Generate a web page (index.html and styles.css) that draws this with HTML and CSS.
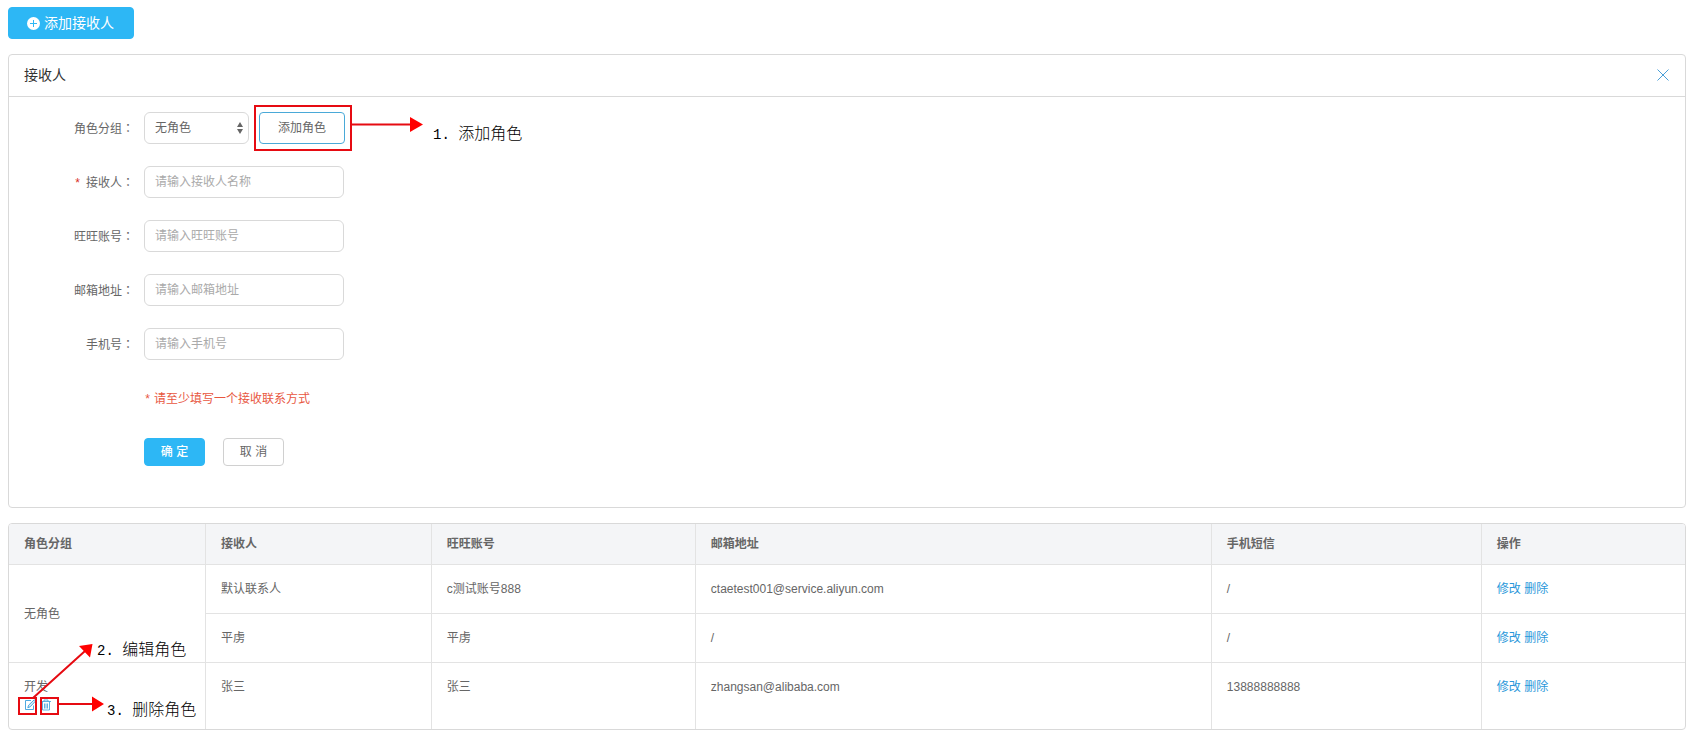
FILE: index.html
```html
<!DOCTYPE html>
<html lang="zh-CN">
<head>
<meta charset="utf-8">
<title>接收人</title>
<link rel="stylesheet" href="styles.css">
</head>
<body>
<main class="page">
  <div class="toolbar">
    <button type="button" class="btn btn-primary btn-large">
      <svg class="plus-icon" viewBox="0 0 13 13" aria-hidden="true"><circle cx="6.5" cy="6.5" r="6.5" fill="#fff"/><path d="M6.5 3v7M3 6.5h7" stroke="#2db7f5" stroke-width="1"/></svg>
      <span>添加接收人</span>
    </button>
  </div>

  <section class="panel">
    <header class="panel-head">
      <h1 class="panel-title">接收人</h1>
      <button type="button" class="close" aria-label="关闭">
        <svg viewBox="0 0 12 12" width="12" height="12"><path d="M.5 .5l11 11M11.5 .5l-11 11" stroke="#4a9fd8" stroke-width="1" fill="none"/></svg>
      </button>
    </header>
    <form class="form">
      <div class="row">
        <label class="label" for="role">角色分组<span class="colon" lang="zh-Hant">：</span></label>
        <div class="select-wrap">
          <select id="role" class="field"><option>无角色</option></select>
          <svg class="select-arrows" viewBox="0 0 6 12" aria-hidden="true"><path d="M3 0l3 5H0zM3 12l3-5H0z" fill="#666"/></svg>
        </div>
        <div class="role-add">
          <button type="button" class="btn btn-outline">添加角色</button>
          <svg class="mark mark-add" viewBox="0 0 170 48" aria-hidden="true"><rect x="1" y="2" width="96" height="44" fill="none" stroke="#e60b12" stroke-width="2"/><path d="M98 20.500H158" stroke="#e60b12" stroke-width="2"/><path d="M156 13l13 7.500-13 7.500z" fill="#f00"/></svg>
          <span class="note note-add"><span class="num">1. </span>添加角色</span>
        </div>
      </div>
      <div class="row">
        <label class="label" for="name"><span class="star">*</span>接收人<span class="colon" lang="zh-Hant">：</span></label>
        <input id="name" class="field" type="text" placeholder="请输入接收人名称">
      </div>
      <div class="row">
        <label class="label" for="wang">旺旺账号<span class="colon" lang="zh-Hant">：</span></label>
        <input id="wang" class="field" type="text" placeholder="请输入旺旺账号">
      </div>
      <div class="row">
        <label class="label" for="mail">邮箱地址<span class="colon" lang="zh-Hant">：</span></label>
        <input id="mail" class="field" type="email" placeholder="请输入邮箱地址">
      </div>
      <div class="row">
        <label class="label" for="phone">手机号<span class="colon" lang="zh-Hant">：</span></label>
        <input id="phone" class="field" type="tel" placeholder="请输入手机号">
      </div>
      <p class="hint"><span class="star">*</span>请至少填写一个接收联系方式</p>
      <div class="actions">
        <button type="submit" class="btn btn-primary btn-small">确 定</button>
        <button type="button" class="btn btn-small">取 消</button>
      </div>
    </form>
  </section>

  <table class="grid">
    <colgroup><col class="c-role"><col class="c-name"><col class="c-wang"><col class="c-mail"><col class="c-sms"><col class="c-ops"></colgroup>
    <thead>
      <tr><th>角色分组</th><th>接收人</th><th>旺旺账号</th><th>邮箱地址</th><th>手机短信</th><th>操作</th></tr>
    </thead>
    <tbody>
      <tr><td rowspan="2" class="middle">无角色</td><td>默认联系人</td><td>c测试账号888</td><td>ctaetest001@service.aliyun.com</td><td>/</td><td><a href="#">修改</a> <a href="#">删除</a></td></tr>
      <tr><td>平虏</td><td>平虏</td><td>/</td><td>/</td><td><a href="#">修改</a> <a href="#">删除</a></td></tr>
      <tr>
        <td>开发
          <div class="role-tools">
            <a href="#" class="tool" aria-label="编辑角色"><svg viewBox="0 0 12 12" width="12" height="12"><path d="M7 1.500H1.500v9h8V6.500" fill="none" stroke="#3a9fdc" stroke-width=".9"/><path d="M3.800 8.700l.8-2.500L10.200.8l1.300 1.300L6.200 7.800z" fill="#d8ecf9" stroke="#3a9fdc" stroke-width=".9"/></svg></a>
            <a href="#" class="tool" aria-label="删除角色"><svg viewBox="0 0 12 12" width="12" height="12"><path d="M1 2.500h10M4 2.500v-1.500h4v1.500M2.500 2.500v8.500h7V2.500M4.500 4.500v5M6 4.500v5M7.500 4.500v5" fill="none" stroke="#3a9fdc" stroke-width=".8"/></svg></a>
            <svg class="mark mark-tools" viewBox="0 0 88 74" aria-hidden="true"><rect x="2" y="56" width="17" height="16" fill="none" stroke="#e60b12" stroke-width="2"/><rect x="24" y="56" width="17" height="16" fill="none" stroke="#e60b12" stroke-width="2"/><path d="M16 56L68 9M42 62H76" stroke="#e60b12" stroke-width="2"/><path d="M75.500 2L62 4l11 11.500zM75 54.500l12 7.500L75 69.500z" fill="#f00"/></svg>
            <span class="note note-edit"><span class="num">2. </span>编辑角色</span>
            <span class="note note-delete"><span class="num">3. </span>删除角色</span>
          </div>
        </td>
        <td>张三</td><td>张三</td><td>zhangsan@alibaba.com</td><td>13888888888</td><td><a href="#">修改</a> <a href="#">删除</a></td>
      </tr>
    </tbody>
  </table>
</main>
</body>
</html>
```

FILE: styles.css
```css
* { box-sizing: border-box; }

body {
  margin: 0;
  background: #fff;
  color: #666;
  font: 12px/18px "Liberation Sans", "Noto Sans CJK SC", sans-serif;
}

button, input, select { font: inherit; color: inherit; }
a { color: #2a97da; text-decoration: none; }
.page { padding: 7px 11px 10px 8px; }
.toolbar { display: flex; margin-bottom: 15px; }

.btn {
  display: inline-flex;
  align-items: center;
  justify-content: center;
  gap: 4px;
  height: 32px;
  padding: 0 18px;
  border: 1px solid #d0d0d0;
  border-radius: 4px;
  background: #fff;
  white-space: nowrap;
  cursor: pointer;
}
.btn-primary { border-color: #2db7f5; background: #2db7f5; color: #fff; }
.btn-large { padding: 0 19px 0 18px; font-size: 14px; }
.btn-small { width: 61px; height: 28px; padding: 0; }
.btn-primary.btn-small { font-weight: 500; }
.btn-outline { border-color: #4aa9d8; }
.plus-icon { width: 13px; height: 13px; }

.panel {
  margin-bottom: 15px;
  border: 1px solid #d9d9d9;
  border-radius: 4px;
}
.panel-head {
  display: flex;
  align-items: center;
  justify-content: space-between;
  height: 42px;
  padding: 0 16px 2px 15px;
  border-bottom: 1px solid #d9d9d9;
}
.panel-title { margin: 0; color: #333; font-size: 14px; font-weight: 400; }
.close { display: flex; padding: 0; border: 0; background: none; cursor: pointer; }

.form {
  display: flex;
  flex-direction: column;
  gap: 22px;
  padding: 15px 0 41px;
}
.row { display: flex; align-items: center; }
.label { width: 125px; margin-right: 10px; text-align: right; }
.colon { font-family: "Noto Sans CJK TC", sans-serif; }
.star {
  display: inline-block;
  width: 10px;
  text-align: left;
  font-family: "Liberation Mono", monospace;
  line-height: 12px;
  color: #e8573f;
}
.label .star { width: 12px; color: #d93026; }
.field {
  width: 200px;
  height: 32px;
  padding: 0 10px;
  border: 1px solid #d9d9d9;
  border-radius: 6px;
  background: #fff;
}
.field::placeholder { color: #aaa; opacity: 1; }
.select-wrap { position: relative; width: 105px; margin-right: 10px; }
select.field { width: 100%; appearance: none; }
.select-arrows {
  position: absolute;
  top: 10px;
  right: 6px;
  width: 6px;
  height: 12px;
  pointer-events: none;
}
.role-add { position: relative; display: flex; }
.hint { margin: 0 0 0 135px; color: #e8573f; line-height: 34px; }
.actions { display: flex; gap: 18px; margin-left: 135px; }

.mark { position: absolute; pointer-events: none; }
.mark-add { top: -8px; left: -5px; width: 170px; height: 48px; }
.mark-tools { bottom: -2px; left: -7px; width: 88px; height: 74px; }
.note {
  position: absolute;
  color: #000;
  font-size: 16px;
  font-weight: 300;
  line-height: 20px;
  white-space: pre;
}
.num { font: 14px/20px "Liberation Mono", monospace; }
.note-add { top: 12px; left: 174px; }
.note-edit { top: -56px; left: 73px; }
.note-delete { top: 4px; left: 83px; }

.grid {
  width: 100%;
  table-layout: fixed;
  border: 1px solid #d9d9d9;
  border-radius: 4px;
  border-collapse: separate;
  border-spacing: 0;
  overflow: hidden;
}
.c-role { width: 11.75%; }
.c-name { width: 13.48%; }
.c-wang { width: 15.75%; }
.c-mail { width: 30.79%; }
.c-sms { width: 16.11%; }
.grid th, .grid td {
  padding: 15px;
  border-right: 1px solid #e3e3e3;
  border-bottom: 1px solid #e3e3e3;
  text-align: left;
  vertical-align: top;
}
.grid th { padding: 11px 15px; background: #f4f5f7; font-weight: 700; }
.grid td.middle { vertical-align: middle; }
.grid tr > :last-child { border-right: 0; }
.grid tbody tr:last-child td { border-bottom: 0; }
.role-tools { position: relative; display: flex; align-items: center; gap: 4px; height: 18px; }
.tool { display: flex; }
```
